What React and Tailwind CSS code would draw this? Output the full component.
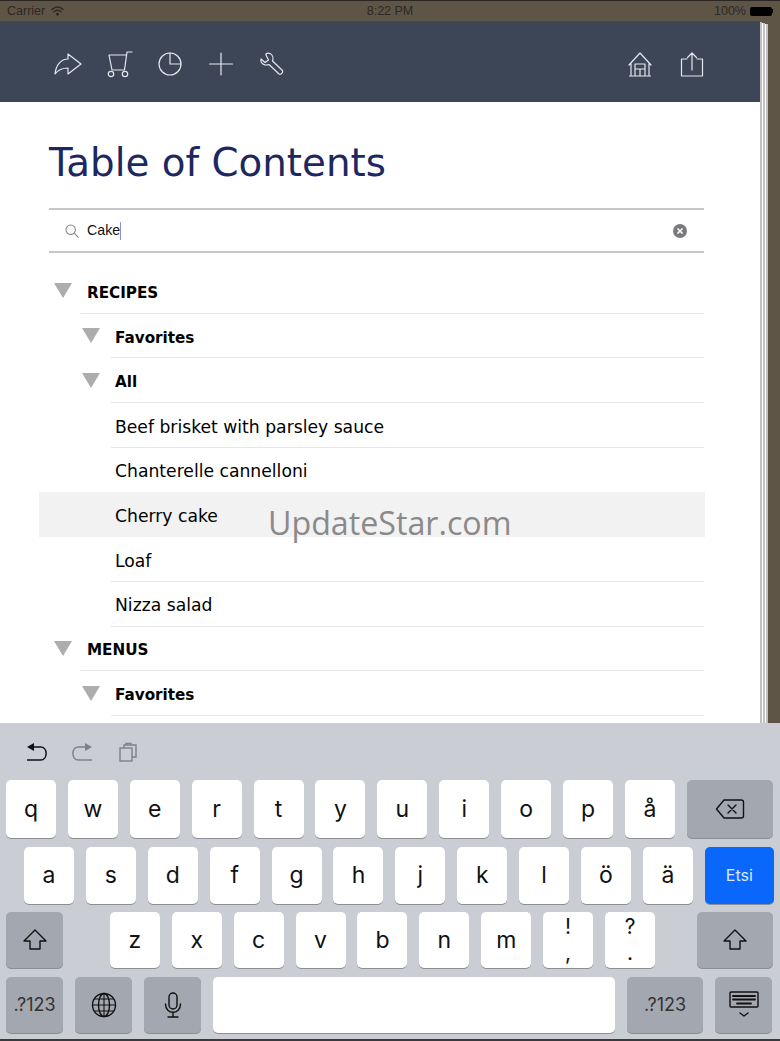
import React from "react";

const sans = "font-['DejaVu_Sans',sans-serif]";

function ToolIcon({ children }) {
  return (
    <svg width="28" height="28" viewBox="0 0 28 28" fill="none" stroke="#e4e8ee" strokeWidth="1.2" strokeLinejoin="round" strokeLinecap="round">
      {children}
    </svg>
  );
}

function Triangle() {
  return (
    <svg width="18" height="15" viewBox="0 0 18 15" className="shrink-0 -mt-[1px]">
      <polygon points="0,0 18,0 9,15" fill="#adadad" />
    </svg>
  );
}

function Row({ level, kind, open, active, flat, children }) {
  const gutter = level === 0 ? "w-[42px] pl-[15px]" : "w-[72px] pl-[43px]";
  const text = kind === "leaf" ? "font-normal text-[17.2px]" : "font-bold text-[15.2px]";
  const pad = level === 0 ? "pl-[6px]" : "pl-[4px]";
  const line = active || flat ? "border-transparent" : "border-[#e6e6e6]";
  return (
    <div className={`flex h-[44.7px] pr-px ${active ? "bg-[#f2f2f2]" : ""}`}>
      <div className={`flex shrink-0 items-center ${gutter}`}>{open && <Triangle />}</div>
      <div className={`flex flex-1 items-center border-b pt-[5px] text-black ${line} ${pad} ${text}`}>
        {children}
      </div>
    </div>
  );
}

function Key({ children, className = "w-[50px] bg-white text-[23px]" }) {
  return (
    <div className={`flex h-full shrink-0 flex-col items-center justify-center rounded-[5px] text-[#111] shadow-[0_1px_0_#8b8e95] ${className}`}>
      {children}
    </div>
  );
}

const grey = "bg-[#a3a7b0]";

function KeySvg({ w = 28, h = 24, children }) {
  return (
    <svg width={w} height={h} viewBox={`0 0 ${w} ${h}`} fill="none" stroke="#111" strokeWidth="1.4" strokeLinejoin="round" strokeLinecap="round">
      {children}
    </svg>
  );
}

function ShiftIcon() {
  return (
    <KeySvg w={26} h={24}>
      <path d="M13 2 L24 13 H18 V21 H8 V13 H2 Z" />
    </KeySvg>
  );
}

export default function App() {
  return (
    <div className="relative flex h-[1041px] w-[780px] flex-col overflow-hidden bg-[#5f5547]">
      {/* status bar */}
      <div className="flex h-[21px] shrink-0 items-center border-t border-[#2a2622] px-[7px] font-['Liberation_Sans',sans-serif] text-[12.5px] text-[#2c2823]">
        <div className="flex flex-1 items-center gap-[6px]">
          <span>Carrier</span>
          <svg width="13" height="10" viewBox="0 0 13 10" fill="none" stroke="#2c2823" strokeWidth="1.5" strokeLinecap="round">
            <path d="M1 3.5 C4.5 0.3 8.5 0.3 12 3.5" />
            <path d="M3 5.7 C5 4 8 4 10 5.7" />
            <circle cx="6.5" cy="8.3" r="0.7" />
          </svg>
        </div>
        <div className="text-center">8:22 PM</div>
        <div className="flex flex-1 items-center justify-end">
          <span className="mr-[4px]">100%</span>
          <div className="h-[9px] w-[22px] rounded-[2px] bg-black" />
          <div className="h-[4px] w-px bg-black" />
        </div>
      </div>

      <div className="flex min-h-0 flex-1">
        {/* page */}
        <div className="flex w-[760px] shrink-0 flex-col bg-white">
          <div className="flex h-[81px] shrink-0 items-center justify-between bg-[#3c4656] pl-[54px] pr-[54px] pt-1">
            <div className="flex gap-[23px]">
              <ToolIcon>
                <path d="M27 14 L14 4 V9 C7 9 2 15 1 24 C4 20 8 18 14 18 V24 Z" />
              </ToolIcon>
              <ToolIcon>
                <path d="M27 2 H22 L19.5 20 H7 L4 5 H21.5" />
                <circle cx="6" cy="24" r="2.7" />
                <circle cx="20" cy="24" r="2.7" />
              </ToolIcon>
              <ToolIcon>
                <circle cx="14" cy="14" r="11" />
                <path d="M14 3 V14 H25" />
              </ToolIcon>
              <ToolIcon>
                <path d="M14 3 V25 M2.5 14 H25.5" />
              </ToolIcon>
              <ToolIcon>
                <path d="M3 9 L7 12.5 L10.5 10 L8 5 C7 3 11 3 12 3.5 C15 5 15.5 8.5 14.5 11 L24.5 20.5 C25.5 22.5 23 25 21 24 L11 14.5 C8.5 15.5 5 15 3.5 12.5 C3 11.5 2.5 10 3 9 Z" />
              </ToolIcon>
            </div>
            <div className="flex gap-[24px]">
              <ToolIcon>
                <path d="M3 15 L14 3 L25 15 M5 13 V26 M23 13 V26 M3.5 26 H24.5 M9 26 V14 H19 V26 M9 19 H19 M14 19 V26" />
              </ToolIcon>
              <ToolIcon>
                <path d="M9 9 H3.5 V26 H24.5 V9 H19 M14 20 V3 M9.5 7.5 L14 3 L18.5 7.5" />
              </ToolIcon>
            </div>
          </div>

          <div className="min-h-0 flex-1 overflow-hidden">
            <h1 className={`mt-[39px] ml-[49px] text-[38.8px] leading-[44px] font-normal text-[#1d2860] ${sans}`}>Table of Contents</h1>

            <div className="mt-[23px] ml-[49px] flex h-[45px] w-[655px] items-center border-y-2 border-[#c8c8c8] pl-[16px] pr-[17px] font-['Liberation_Sans',sans-serif] text-[14.2px] text-[#111]">
              <svg width="14" height="14" viewBox="0 0 14 14" fill="none" stroke="#8a8a8a" strokeWidth="1.1" strokeLinecap="round" className="shrink-0">
                <circle cx="5.7" cy="5.7" r="4.7" />
                <path d="M9.2 9.2 L13.3 13.3" />
              </svg>
              <span className="ml-[8px]">Cake</span>
              <div className="h-[18px] w-px bg-[#8a92d8]" />
              <svg width="14" height="14" viewBox="0 0 14 14" className="ml-auto shrink-0">
                <circle cx="7" cy="7" r="7" fill="#7b7b7f" />
                <path d="M4.5 4.5 L9.5 9.5 M9.5 4.5 L4.5 9.5" stroke="#fff" strokeWidth="1.7" />
              </svg>
            </div>

            <div className={`mt-[16px] ml-[39px] w-[666px] ${sans}`}>
              <Row level={0} open>RECIPES</Row>
              <Row level={1} open>Favorites</Row>
              <Row level={1} open>All</Row>
              <Row level={1} kind="leaf">Beef brisket with parsley sauce</Row>
              <Row level={1} kind="leaf" flat>Chanterelle cannelloni</Row>
              <Row level={1} kind="leaf" active>Cherry cake</Row>
              <Row level={1} kind="leaf">Loaf</Row>
              <Row level={1} kind="leaf">Nizza salad</Row>
              <Row level={0} open>MENUS</Row>
              <Row level={1} open>Favorites</Row>
            </div>
          </div>
        </div>

        {/* pages stacked behind */}
        <div className="mt-px h-full w-[2px] bg-[#c0c0c0]" />
        <div className="mt-[2px] h-full w-px bg-white" />
        <div className="mt-[2px] h-full w-[2px] bg-[#c0c0c0]" />
        <div className="mt-[3px] h-full w-px bg-white" />
        <div className="mt-[3px] h-full w-[2px] bg-[#c0c0c0]" />
      </div>

      {/* keyboard */}
      <div className="flex h-[318px] shrink-0 flex-col border-b-2 border-[#3a3a3c] bg-[#cacdd4] px-[6px] font-['Inter',sans-serif] text-[#111]">
        <div className="flex h-[57px] shrink-0 items-center pl-[20px] pt-[1px]">
          <svg width="22" height="20" viewBox="0 0 22 20" fill="none" stroke="#111" strokeWidth="1.5">
            <path d="M7 5 H14.5 C22 5 22 18 14.5 18 H1" />
            <polygon points="1,5 8,1 8,9" fill="#111" stroke="none" />
          </svg>
          <svg width="22" height="20" viewBox="0 0 22 20" fill="none" stroke="#7d8188" strokeWidth="1.5" className="ml-[23px]">
            <path d="M15 5 H7.5 C0 5 0 18 7.5 18 H21" />
            <polygon points="21,5 14,1 14,9" fill="#7d8188" stroke="none" />
          </svg>
          <svg width="20" height="20" viewBox="0 0 20 20" fill="none" stroke="#7d8188" strokeWidth="1.4" className="ml-[26px]">
            <rect x="1" y="6" width="12" height="13" />
            <path d="M5 6 V3 H17 V15 H13" />
            <path d="M7 3 V1.5 H12 V3" />
          </svg>
        </div>

        <div className="flex flex-col gap-[8.6px]">
          <div className="flex h-[58px] gap-[11.9px]">
            {["q", "w", "e", "r", "t", "y", "u", "i", "o", "p", "å"].map((k) => (
              <Key key={k}>{k}</Key>
            ))}
            <Key className={`w-[86px] ${grey}`}>
              <KeySvg w={30} h={22}>
                <path d="M9 2 H26 C27.5 2 28.5 3 28.5 4 V18 C28.5 19 27.5 20 26 20 H9 L1.5 11 Z" />
                <path d="M13 7 L21 15 M21 7 L13 15" />
              </KeySvg>
            </Key>
          </div>
          <div className="flex h-[57px] gap-[11.9px] pl-[18px]">
            {["a", "s", "d", "f", "g", "h", "j", "k", "l", "ö", "ä"].map((k) => (
              <Key key={k}>{k}</Key>
            ))}
            <Key className="w-[69px] bg-[#0a67fb] text-[16px] !text-[#dbe8ff]">Etsi</Key>
          </div>
          <div className="flex h-[56px] gap-[11.9px]">
            <Key className={`mr-[35px] w-[57px] ${grey}`}><ShiftIcon /></Key>
            {["z", "x", "c", "v", "b", "n", "m"].map((k) => (
              <Key key={k}>{k}</Key>
            ))}
            <Key className="w-[50px] bg-white text-[21px] leading-[26px]"><span>!</span><span>,</span></Key>
            <Key className="w-[50px] bg-white text-[21px] leading-[26px]"><span>?</span><span>.</span></Key>
            <Key className={`ml-[30px] w-[76px] ${grey}`}><ShiftIcon /></Key>
          </div>
          <div className="flex h-[56px] gap-[12px]">
            <Key className={`w-[57px] text-[18px] !text-[#333] ${grey}`}>.?123</Key>
            <Key className={`w-[57px] ${grey}`}>
              <KeySvg w={26} h={26}>
                <circle cx="13" cy="13" r="11.5" />
                <ellipse cx="13" cy="13" rx="5.5" ry="11.5" />
                <path d="M13 1.5 V24.5 M1.5 13 H24.5 M3.5 7 H22.5 M3.5 19 H22.5" strokeWidth="1.1" />
              </KeySvg>
            </Key>
            <Key className={`w-[57px] ${grey}`}>
              <KeySvg w={18} h={26}>
                <rect x="5" y="1" width="8" height="16" rx="4" />
                <path d="M1.5 12 C1.5 23 16.5 23 16.5 12 M9 21 V25 M4 25 H14" />
              </KeySvg>
            </Key>
            <Key className="w-[402px] bg-white" />
            <Key className={`w-[76px] text-[18px] !text-[#333] ${grey}`}>.?123</Key>
            <Key className={`w-[57px] ${grey}`}>
              <KeySvg w={30} h={28}>
                <rect x="1" y="1" width="28" height="15" rx="1" />
                <path d="M4 5 H26 M4 8.5 H26" strokeWidth="1.8" strokeDasharray="1.6 1" />
                <path d="M8 12.5 H22" strokeWidth="1.8" />
                <path d="M11 22 L15 25 L19 22" />
              </KeySvg>
            </Key>
          </div>
        </div>
      </div>

      {/* site watermark */}
      <div className="absolute left-[268px] top-[502px] font-['Open_Sans',sans-serif] text-[32.2px] leading-[42px] text-[#8a8a8a]">UpdateStar.com</div>
    </div>
  );
}
